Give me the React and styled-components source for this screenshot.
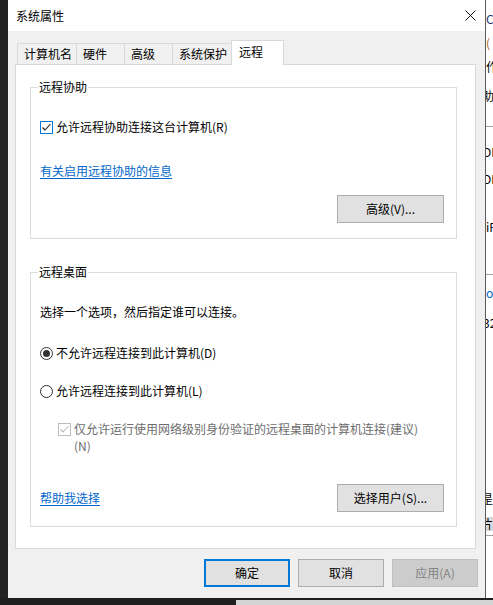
import React from "react";
import styled, { createGlobalStyle } from "styled-components";

const GlobalStyle = createGlobalStyle`
  html, body {
    margin: 0;
    padding: 0;
    background: #1f1f1f;
  }
  body {
    font-family: "Noto Sans CJK SC", "Noto Sans", sans-serif;
    font-size: 12px;
    color: #000;
  }
`;

const Desktop = styled.div`
  width: 493px;
  height: 605px;
  display: flex;
  flex-direction: column;
  overflow: hidden;
  background: #1f1f1f;
`;

const TopRow = styled.div`
  display: flex;
  height: 598px;
  flex: none;
`;

const LeftEdge = styled.div`
  width: 8px;
  flex: none;
  background: #222;
`;

const Dialog = styled.div`
  width: 478px;
  flex: none;
  box-sizing: border-box;
  display: flex;
  flex-direction: column;
  background: #f0f0f0;
  border-right: 1px solid #5c5c5c;
`;

const TitleBar = styled.div`
  height: 31px;
  flex: none;
  display: flex;
  align-items: center;
  justify-content: space-between;
  padding: 0 9px 0 8px;
  background: #fff;
  line-height: 16px;
`;

const CloseIcon = () => (
  <svg width="11" height="11" viewBox="0 0 11 11">
    <path d="M0.5 0.5 L10.5 10.5 M10.5 0.5 L0.5 10.5" stroke="#111" strokeWidth="1" />
  </svg>
);

const Body = styled.div`
  flex: 1;
  display: flex;
  flex-direction: column;
  padding: 9px 9px 11px 7px;
`;

const TabStrip = styled.div`
  height: 24px;
  flex: none;
  display: flex;
  align-items: flex-end;
  padding-left: 2px;
`;

const Tab = styled.div`
  box-sizing: border-box;
  width: ${(p) => p.$w}px;
  height: ${(p) => (p.$active ? 25 : 21)}px;
  margin-left: ${(p) => (p.$first ? 0 : -1)}px;
  margin-bottom: ${(p) => (p.$active ? -1 : 0)}px;
  padding-left: ${(p) => (p.$active ? 7 : 6)}px;
  padding-bottom: ${(p) => (p.$active ? 2 : 0)}px;
  display: flex;
  align-items: center;
  border: 1px solid #d9d9d9;
  border-bottom: none;
  background: ${(p) => (p.$active ? "#fff" : "#f0f0f0")};
  position: relative;
  z-index: ${(p) => (p.$active ? 1 : 0)};
  line-height: 16px;
  white-space: nowrap;
`;

const Panel = styled.div`
  height: 485px;
  flex: none;
  box-sizing: border-box;
  border: 1px solid #d9d9d9;
  background: #fff;
  padding: 22px 0 0 14px;
`;

const GroupBox = styled.div`
  position: relative;
  box-sizing: border-box;
  width: 427px;
  height: ${(p) => p.$h}px;
  margin-top: ${(p) => p.$mt || 0}px;
  border: 1px solid #dcdcdc;
  padding: 31px 12px 0 9px;
  display: flex;
  flex-direction: column;
`;

const Legend = styled.span`
  position: absolute;
  top: -9px;
  left: 7px;
  padding: 0 1px;
  background: #fff;
  line-height: 16px;
`;

const Row = styled.div`
  display: flex;
  align-items: ${(p) => (p.$top ? "flex-start" : "center")};
  gap: 3px;
  min-height: 16px;
  line-height: 16px;
  margin-top: ${(p) => p.$mt || 0}px;
  margin-left: ${(p) => p.$indent || 0}px;
  color: ${(p) => (p.$disabled ? "#6d6d6d" : "#000")};
`;

const Text = styled.div`
  line-height: 16px;
`;

const WrapLabel = styled.div`
  width: 350px;
  line-height: 17px;
`;

const BoxWrap = styled.span`
  display: flex;
  flex: none;
  margin-top: ${(p) => p.$mt || 0}px;
`;

const Link = styled.a`
  color: #0066cc;
  text-decoration: underline;
  text-underline-offset: 2px;
  cursor: pointer;
  line-height: 16px;
`;

const ButtonRow = styled.div`
  display: flex;
  align-items: center;
  justify-content: ${(p) => p.$justify || "flex-end"};
  margin-top: ${(p) => p.$mt || 0}px;
`;

const Button = styled.button`
  box-sizing: border-box;
  width: ${(p) => p.$w || 86}px;
  height: 28px;
  padding: 0;
  font-family: inherit;
  font-size: 12px;
  line-height: 16px;
  color: ${(p) => (p.$disabled ? "#838383" : "#000")};
  background: ${(p) => (p.$disabled ? "#cccccc" : "#e1e1e1")};
  border: ${(p) =>
    p.$default ? "2px solid #0078d7" : p.$disabled ? "1px solid #bfbfbf" : "1px solid #adadad"};
`;

const ButtonBar = styled.div`
  display: flex;
  justify-content: flex-end;
  gap: 8px;
  margin-top: 10px;
  margin-right: -2px;
`;

const OtherWindow = styled.div`
  width: 7px;
  flex: none;
  display: flex;
  flex-direction: column;
  background: #fff;
  overflow: hidden;
`;

const Frag = styled.div`
  height: ${(p) => p.$h}px;
  flex: none;
  line-height: ${(p) => p.$h}px;
  white-space: nowrap;
  margin-left: ${(p) => p.$shift || 0}px;
  color: ${(p) => p.$color || "#000"};
  background: ${(p) => p.$bg || "transparent"};
  border-bottom: ${(p) => (p.$line ? "1px solid #a0a0a0" : "none")};
`;

const BottomRow = styled.div`
  flex: 1;
  display: flex;
`;

const DarkFill = styled.div`
  width: 236px;
  background: #1f1f1f;
`;

const LightFill = styled.div`
  flex: 1;
  border-top: 2px solid #1f1f1f;
  background: #d4d4d4;
`;

const CheckBox = ({ disabled }) => {
  const c = disabled ? "#bcbcbc" : "#0078d7";
  const k = disabled ? "#bcbcbc" : "#1b1b1b";
  return (
    <svg width="13" height="13" viewBox="0 0 13 13">
      <rect x="0.5" y="0.5" width="12" height="12" fill="#fff" stroke={c} />
      <path d="M2.5 6.5 L5 9 L10.5 3" fill="none" stroke={k} strokeWidth="1.1" />
    </svg>
  );
};

const Radio = ({ checked }) => (
  <svg width="13" height="13" viewBox="0 0 13 13">
    <circle cx="6.5" cy="6.5" r="6" fill="#fff" stroke="#333" />
    {checked && <circle cx="6.5" cy="6.5" r="3.5" fill="#333" />}
  </svg>
);

const tabs = [
  { label: "计算机名", w: 60 },
  { label: "硬件", w: 49 },
  { label: "高级", w: 49 },
  { label: "系统保护", w: 60 },
  { label: "远程", w: 53, active: true },
];

const fragments = [
  { h: 11 },
  { h: 15, t: "C", color: "#23386f" },
  { h: 9 },
  { h: 15, t: "(", color: "#b05a10" },
  { h: 9 },
  { h: 15, t: "作" },
  { h: 14 },
  { h: 15, t: "助", shift: -4 },
  { h: 23, line: true },
  { h: 17 },
  { h: 15, t: "DP", shift: -3 },
  { h: 12 },
  { h: 15, t: "DP", shift: -3 },
  { h: 33 },
  { h: 15, t: "iR" },
  { h: 40, line: true },
  { h: 10 },
  { h: 15, t: "o", color: "#0066cc" },
  { h: 15 },
  { h: 15, t: "32", shift: -3 },
  { h: 161 },
  { h: 15, t: "昰", shift: -5 },
  { h: 11 },
  { h: 14, t: "片", shift: -5, bg: "#d9d9d9" },
  { h: 4, line: true },
];

export default function App() {
  return (
    <>
      <GlobalStyle />
      <Desktop>
        <TopRow>
          <LeftEdge />
          <Dialog>
            <TitleBar>
              <span>系统属性</span>
              <CloseIcon />
            </TitleBar>
            <Body>
              <TabStrip>
                {tabs.map((t, i) => (
                  <Tab key={t.label} $w={t.w} $active={t.active} $first={i === 0}>
                    {t.label}
                  </Tab>
                ))}
              </TabStrip>
              <Panel>
                <GroupBox $h={152}>
                  <Legend>远程协助</Legend>
                  <Row>
                    <BoxWrap>
                      <CheckBox />
                    </BoxWrap>
                    <Text>允许远程协助连接这台计算机(R)</Text>
                  </Row>
                  <Row $mt={28}>
                    <Link>有关启用远程协助的信息</Link>
                  </Row>
                  <ButtonRow $mt={16}>
                    <Button $w={107}>高级(V)...</Button>
                  </ButtonRow>
                </GroupBox>
                <GroupBox $h={255} $mt={33}>
                  <Legend>远程桌面</Legend>
                  <Row>
                    <Text>选择一个选项，然后指定谁可以连接。</Text>
                  </Row>
                  <Row $mt={25}>
                    <BoxWrap>
                      <Radio checked />
                    </BoxWrap>
                    <Text>不允许远程连接到此计算机(D)</Text>
                  </Row>
                  <Row $mt={22}>
                    <BoxWrap>
                      <Radio />
                    </BoxWrap>
                    <Text>允许远程连接到此计算机(L)</Text>
                  </Row>
                  <Row $mt={21} $indent={18} $top $disabled>
                    <BoxWrap $mt={3}>
                      <CheckBox disabled />
                    </BoxWrap>
                    <WrapLabel>仅允许运行使用网络级别身份验证的远程桌面的计算机连接(建议)(N)</WrapLabel>
                  </Row>
                  <ButtonRow $mt={30} $justify="space-between">
                    <Link>帮助我选择</Link>
                    <Button $w={107}>选择用户(S)...</Button>
                  </ButtonRow>
                </GroupBox>
              </Panel>
              <ButtonBar>
                <Button $default>确定</Button>
                <Button>取消</Button>
                <Button $disabled>应用(A)</Button>
              </ButtonBar>
            </Body>
          </Dialog>
          <OtherWindow>
            {fragments.map((f, i) => (
              <Frag key={i} $h={f.h} $shift={f.shift} $color={f.color} $bg={f.bg} $line={f.line}>
                {f.t || ""}
              </Frag>
            ))}
          </OtherWindow>
        </TopRow>
        <BottomRow>
          <DarkFill />
          <LightFill />
        </BottomRow>
      </Desktop>
    </>
  );
}
